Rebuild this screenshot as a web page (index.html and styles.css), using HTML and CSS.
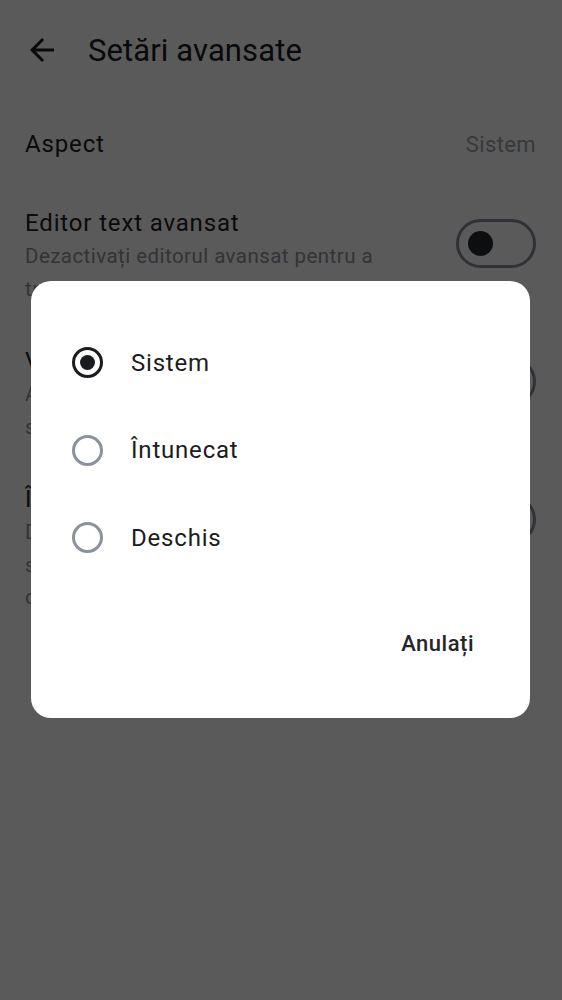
FILE: index.html
```html
<!DOCTYPE html>
<html lang="ro">
<head>
<meta charset="utf-8">
<title>Setări avansate</title>
<link rel="stylesheet" href="styles.css">
</head>
<body>
<div class="screen">
  <header class="topbar">
    <svg class="back" viewBox="0 0 24 24" aria-hidden="true"><path d="M20 11H7.83l5.59-5.59L12 4l-8 8 8 8 1.41-1.41L7.83 13H20v-2z"/></svg>
    <h1 class="title">Setări avansate</h1>
  </header>

  <div class="list">
    <div class="row row-single">
      <span class="row-title">Aspect</span>
      <span class="row-value">Sistem</span>
    </div>

    <div class="row">
      <div class="row-text">
        <div class="row-title">Editor text avansat</div>
        <div class="row-desc">Dezactivați editorul avansat pentru a<br>trece la textul simplu Markdown</div>
      </div>
      <span class="switch"><span class="thumb"></span></span>
    </div>

    <div class="row">
      <div class="row-text">
        <div class="row-title">Vizualizare compactă</div>
        <div class="row-desc">Afișați mai multe note pe ecran, cu<br>spațiere redusă între elemente</div>
      </div>
      <span class="switch"><span class="thumb"></span></span>
    </div>

    <div class="row">
      <div class="row-text">
        <div class="row-title">Încărcare automată</div>
        <div class="row-desc">Descărcați automat atașamentele<br>sincronizate pentru acces offline<br>când sunteți conectat</div>
      </div>
      <span class="switch"><span class="thumb"></span></span>
    </div>
  </div>

  <div class="scrim"></div>

  <div class="dialog" role="dialog">
    <div class="options">
      <div class="option">
        <span class="radio checked"></span>
        <span class="option-label">Sistem</span>
      </div>
      <div class="option">
        <span class="radio"></span>
        <span class="option-label">Întunecat</span>
      </div>
      <div class="option">
        <span class="radio"></span>
        <span class="option-label">Deschis</span>
      </div>
    </div>
    <div class="actions">
      <button class="text-btn">Anulați</button>
    </div>
  </div>
</div>
</body>
</html>
```

FILE: styles.css
```css
* { box-sizing: border-box; }

html, body {
  margin: 0;
  padding: 0;
  background: #ffffff;
}

body {
  font-family: Roboto, "Noto Sans", "Liberation Sans", sans-serif;
  color: #1b1c1f;
}

.screen {
  position: relative;
  width: 562px;
  height: 1000px;
  overflow: hidden;
  background: #ffffff;
}

.topbar {
  height: 100px;
  display: flex;
  align-items: center;
  padding-left: 24px;
  gap: 28px;
}

.back {
  width: 36px;
  height: 36px;
  fill: #1b1c1f;
  flex: none;
}

.title {
  margin: 0;
  font-size: 31px;
  font-weight: 400;
  letter-spacing: 0.1px;
  color: #1b1c1f;
}

.list {
  display: flex;
  flex-direction: column;
  padding-top: 1.5px;
}

.row {
  display: flex;
  align-items: flex-start;
  justify-content: space-between;
  padding: 19.5px 26px 19.5px 25px;
  gap: 40px;
}

.row-single {
  height: 85px;
  align-items: center;
  padding-top: 0;
  padding-bottom: 0;
}

.row-text {
  flex: 1;
  min-width: 0;
}

.row-title {
  font-size: 24px;
  line-height: 34px;
  letter-spacing: 0.85px;
  color: #1f2023;
}

.row-value {
  font-size: 22px;
  letter-spacing: 0.4px;
  color: #9aa1ad;
}

.row-desc {
  font-size: 20.5px;
  line-height: 32.5px;
  letter-spacing: 0.45px;
  color: #8e939c;
  white-space: nowrap;
}

.switch {
  flex: none;
  width: 80px;
  height: 49px;
  margin-top: 13px;
  border: 3px solid #838a96;
  border-radius: 25px;
  display: flex;
  align-items: center;
  padding-left: 9px;
}

.thumb {
  width: 25px;
  height: 25px;
  border-radius: 50%;
  background: #26282d;
}

.scrim {
  position: absolute;
  inset: 0;
  background: rgba(0, 0, 0, 0.647);
}

.dialog {
  position: absolute;
  left: 31px;
  top: 281px;
  width: 499px;
  height: 437px;
  background: #ffffff;
  border-radius: 20px;
  padding-top: 38px;
  display: flex;
  flex-direction: column;
}

.options {
  display: flex;
  flex-direction: column;
}

.option {
  height: 87.5px;
  display: flex;
  align-items: center;
  padding-left: 41px;
  gap: 28px;
}

.radio {
  width: 31px;
  height: 31px;
  border-radius: 50%;
  border: 3px solid #8b929b;
  display: flex;
  align-items: center;
  justify-content: center;
  flex: none;
}

.radio.checked {
  border-color: #1b1c1f;
}

.radio.checked::after {
  content: "";
  width: 15px;
  height: 15px;
  border-radius: 50%;
  background: #1b1c1f;
}

.option-label {
  font-size: 24px;
  letter-spacing: 0.8px;
  color: #1b1c1f;
}

.actions {
  display: flex;
  justify-content: flex-end;
  padding: 0 44px;
  margin-top: 37.5px;
}

.text-btn {
  height: 48px;
  padding: 0 12px;
  border: none;
  background: transparent;
  font-family: Roboto, "Noto Sans", "Liberation Sans", sans-serif;
  font-size: 22px;
  font-weight: 500;
  letter-spacing: 0.5px;
  color: #24262a;
}
```
